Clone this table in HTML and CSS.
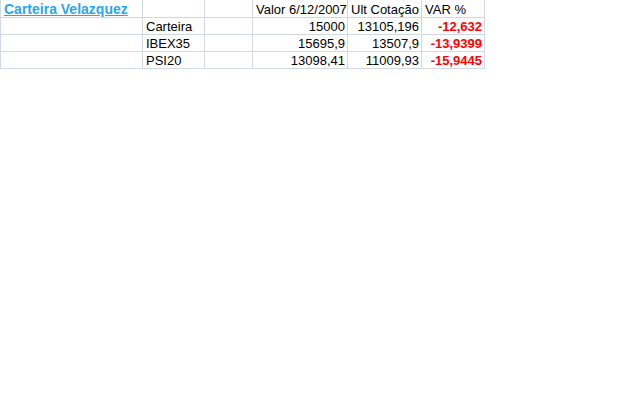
FILE: index.html
```html
<!DOCTYPE html>
<html>
<head>
    <title>Carteira Velazquez</title>
    <meta name="viewport" content="width=device-width, initial-scale=1.0">
    <link rel="stylesheet" href="styles.css">
</head>
<body>
    <table class="sheet">
        <colgroup>
            <col class="c1">
            <col class="c2">
            <col class="c3">
            <col class="c4">
            <col class="c5">
            <col class="c6">
        </colgroup>
        <tr class="first">
            <td><a class="title" href="#">Carteira Velazquez</a></td>
            <td></td>
            <td></td>
            <td>Valor 6/12/2007</td>
            <td>Ult Cotação</td>
            <td>VAR %</td>
        </tr>
        <tr>
            <td></td>
            <td>Carteira</td>
            <td></td>
            <td class="num">15000</td>
            <td class="num">13105,196</td>
            <td class="num neg">-12,632</td>
        </tr>
        <tr>
            <td></td>
            <td>IBEX35</td>
            <td></td>
            <td class="num">15695,9</td>
            <td class="num">13507,9</td>
            <td class="num neg">-13,9399</td>
        </tr>
        <tr>
            <td></td>
            <td>PSI20</td>
            <td></td>
            <td class="num">13098,41</td>
            <td class="num">11009,93</td>
            <td class="num neg">-15,9445</td>
        </tr>
    </table>
</body>
</html>
```

FILE: styles.css
```css
/* Base styles */
* {
    box-sizing: border-box;
    margin: 0;
    padding: 0;
}

body {
    font-family: 'Liberation Sans', Arial, sans-serif;
    font-size: 13px;
    color: #000;
    background: #fff;
}

/* Spreadsheet grid */
.sheet {
    border-collapse: separate;
    border-spacing: 0;
    table-layout: fixed;
    width: 485px;
}

.c1 { width: 143px; }
.c2 { width: 62px; }
.c3 { width: 48px; }
.c4 { width: 95px; }
.c5 { width: 74px; }
.c6 { width: 63px; }

.sheet td {
    height: 17px;
    padding: 0 2px 0 3px;
    border-right: 1px solid #d0d7e5;
    border-bottom: 1px solid #d0d7e5;
    white-space: nowrap;
    overflow: visible;
    line-height: 15px;
    vertical-align: bottom;
}

.sheet td:first-child {
    border-left: 1px solid #d0d7e5;
}

.sheet .first td {
    height: 18px;
}

.title {
    color: #2ba6e6;
    font-size: 14px;
    font-weight: bold;
    text-decoration: underline;
}

.num {
    text-align: right;
}

.neg {
    color: #ff0000;
    font-weight: bold;
}
```
